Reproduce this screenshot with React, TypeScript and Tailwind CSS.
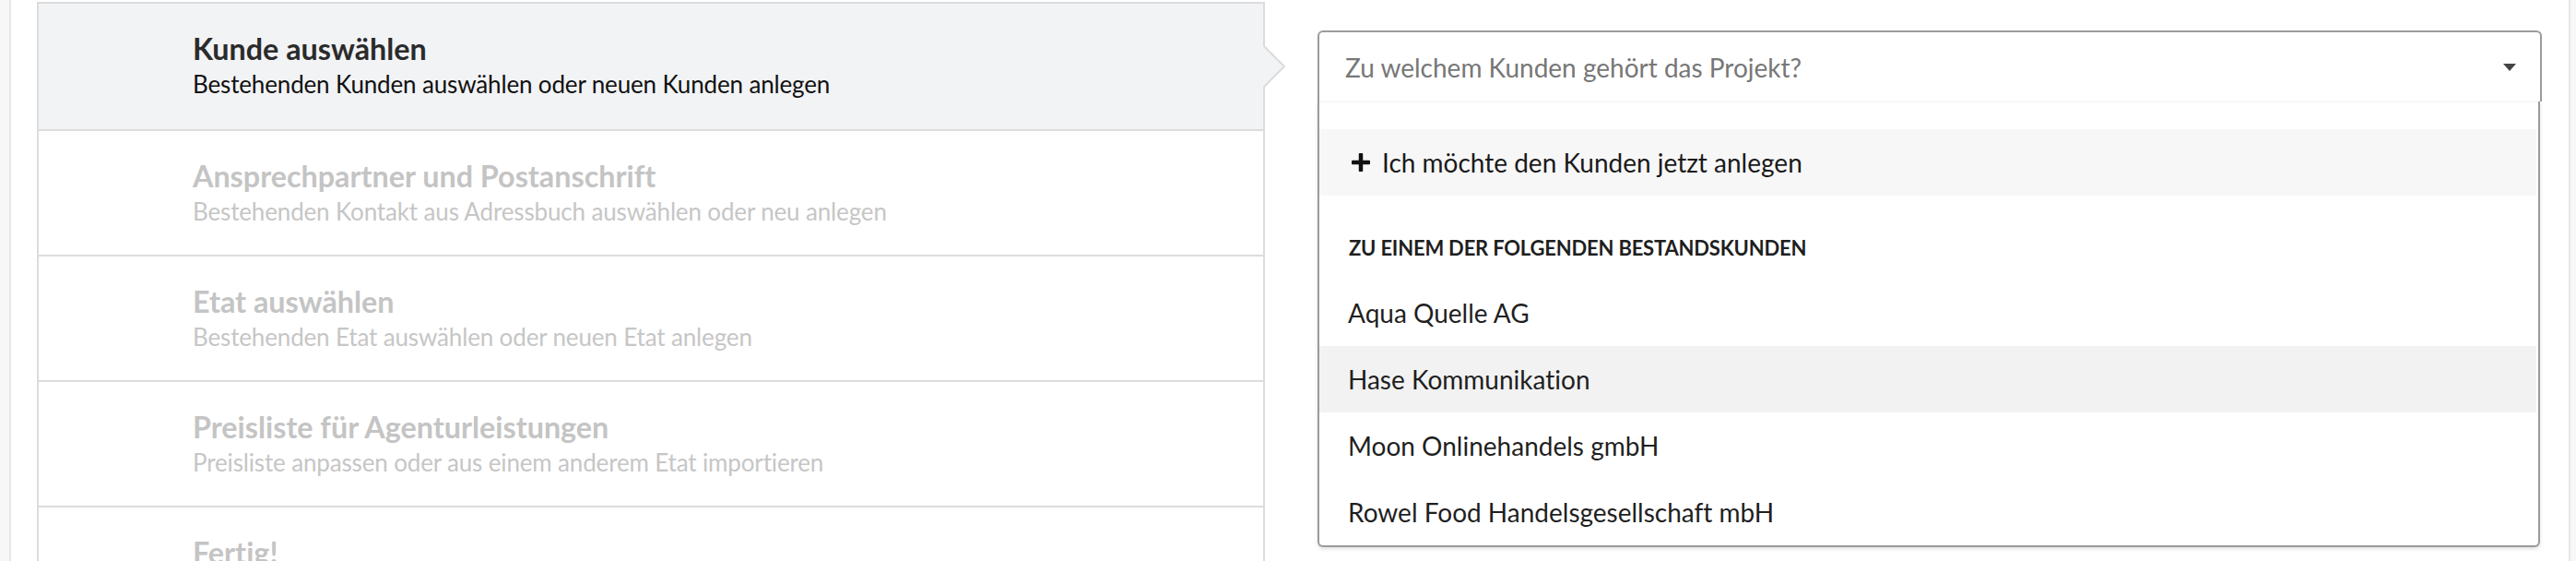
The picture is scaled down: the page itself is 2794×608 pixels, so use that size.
import React from "react";

const steps = [
  { title: "Kunde auswählen", sub: "Bestehenden Kunden auswählen oder neuen Kunden anlegen", active: true },
  { title: "Ansprechpartner und Postanschrift", sub: "Bestehenden Kontakt aus Adressbuch auswählen oder neu anlegen" },
  { title: "Etat auswählen", sub: "Bestehenden Etat auswählen oder neuen Etat anlegen" },
  { title: "Preisliste für Agenturleistungen", sub: "Preisliste anpassen oder aus einem anderem Etat importieren" },
  { title: "Fertig!", sub: "" },
];

const customers = [
  "Aqua Quelle AG",
  "Hase Kommunikation",
  "Moon Onlinehandels gmbH",
  "Rowel Food Handelsgesellschaft mbH",
];

export default function App() {
  return (
    <div className="h-[608px] w-full overflow-hidden bg-[#f7f7f7] font-['Lato',sans-serif] [font-variant-ligatures:none]">
      <div className="ml-[10px] mr-[6px] flex h-full border-x-2 border-[#e6e6e6] bg-white pl-[28px]">
        {/* Steps column */}
        <div className="relative mt-[2px] flex w-[1332px] shrink-0 flex-col border-x-2 border-t-2 border-[#dcdcdc]">
          {steps.map((s, i) => (
            <div
              key={i}
              className={
                "shrink-0 border-b-2 border-[#dcdcdc] pl-[167px] pt-[30px] " +
                (i === 0 ? "h-[138px] bg-[#f2f3f5]" : "h-[136px]")
              }
            >
              <div
                className={
                  "text-[32.3px] font-bold leading-[38px] " +
                  (s.active ? "text-[#2b2b2b]" : "text-[#c4c4c4]")
                }
              >
                {s.title}
              </div>
              {s.sub && (
                <div
                  className={
                    "mt-[3px] text-[26px] leading-[32px] tracking-[-0.15px] " +
                    (s.active ? "text-[#111111]" : "text-[#c6c6c6]")
                  }
                >
                  {s.sub}
                </div>
              )}
            </div>
          ))}
          {/* arrow of active step */}
          <svg
            className="absolute left-[1328px] top-[46px]"
            width="26"
            height="46"
            viewBox="0 0 26 46"
          >
            <polygon points="0,0 2,0 23,22 2,44 0,44" fill="#f2f3f5" />
            <polyline points="1,0 23,22 1,44" fill="none" stroke="#dcdcdc" strokeWidth="2" />
          </svg>
        </div>

        {/* Dropdown */}
        <div className="ml-[57px] mt-[33px] flex w-[1328px] shrink-0 flex-col self-start">
          <div className="flex h-[77px] items-center justify-between rounded-t-[6px] border-2 border-b-0 border-[#9b9b9b] bg-white pl-[28px] pr-[26px]">
            <span className="text-[28px] leading-[34px] text-[#777777]">
              Zu welchem Kunden gehört das Projekt?
            </span>
            <svg width="14" height="8" viewBox="0 0 14 8">
              <polygon points="0,0 14,0 7,8" fill="#444444" />
            </svg>
          </div>
          <div className="mr-[2px] rounded-b-[6px] border-2 border-t-0 border-[#9b9b9b] bg-white shadow-[0_2px_4px_rgba(0,0,0,0.12)]">
            <div className="border-t border-[#f3f3f3] pt-[29px]">
              <div className="mr-[2px] flex h-[72px] items-center bg-[#f7f7f7] pl-[34px]">
                <svg width="22" height="22" viewBox="0 0 22 22" className="mr-[12px]">
                  <rect x="8.75" y="1" width="4.5" height="20" rx="1" fill="#111111" />
                  <rect x="1" y="8.75" width="20" height="4.5" rx="1" fill="#111111" />
                </svg>
                <span className="text-[28px] leading-[34px] text-[#1a1a1a]">
                  Ich möchte den Kunden jetzt anlegen
                </span>
              </div>
              <div className="h-[91px] pl-[32px] pt-[43px]">
                <div className="text-[22px] font-bold uppercase leading-[27px] tracking-[-0.2px] text-[#1f1f1f]">
                  Zu einem der folgenden Bestandskunden
                </div>
              </div>
              {customers.map((c, i) => (
                <div
                  key={c}
                  className={
                    "mr-[2px] flex h-[72px] items-center pl-[31px] " +
                    (i === 1 ? "bg-[#f2f2f2]" : "")
                  }
                >
                  <span className="text-[28px] leading-[34px] text-[#1f1f1f]">{c}</span>
                </div>
              ))}
            </div>
          </div>
        </div>
      </div>
    </div>
  );
}
